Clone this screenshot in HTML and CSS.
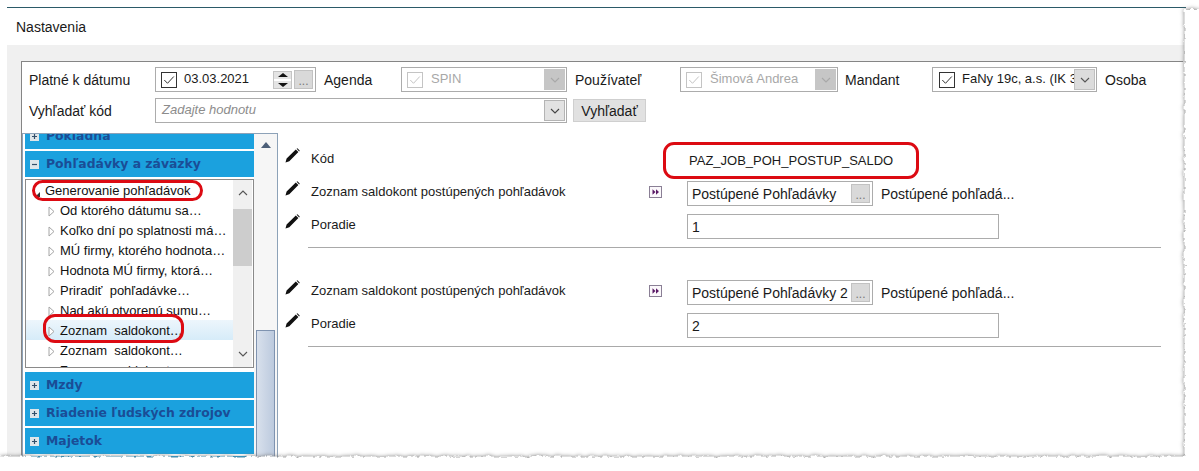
FILE: index.html
```html
<!DOCTYPE html>
<html lang="sk">
<head>
<meta charset="utf-8">
<title>Nastavenia</title>
<link rel="stylesheet" href="styles.css">
</head>
<body>
<svg class="defs" width="0" height="0" aria-hidden="true">
  <defs>
    <symbol id="pencil" viewBox="0 0 15 15"><path d="M0.5 14.5 L1.6 10.6 L10.8 1.6 L13.4 4.1 L4.3 13.3 Z M11.6 0.8 L12.4 0.3 L14.7 2.6 L14.2 3.4 Z" fill="#111"/></symbol>
    <symbol id="expand" viewBox="0 0 13 12"><rect x="0.5" y="0.5" width="12" height="11" fill="#fbf8fb" stroke="#8a7f95"/><path d="M3.5 3.2 L6.5 6 L3.5 8.8 Z M7 3.2 L10 6 L7 8.8 Z" fill="#5a1a66"/></symbol>
    <symbol id="tick" viewBox="0 0 16 16"><rect x="0.5" y="0.5" width="15" height="15" fill="#fff" stroke="currentColor"/><path d="M3.3 8 L6.5 11.3 L12.8 4.5" fill="none" stroke="currentColor" stroke-width="1"/></symbol>
    <symbol id="chev" viewBox="0 0 10 6"><path d="M1 1 L5 5 L9 1" fill="none" stroke="currentColor" stroke-width="1.1"/></symbol>
    <symbol id="tri" viewBox="0 0 7 11"><path d="M1 1 L6 5.5 L1 10 Z" fill="#fff" stroke="#a6a6a6"/></symbol>
    <symbol id="plus" viewBox="0 0 9 9"><rect x="0" y="0" width="9" height="9" fill="#dfe6ea"/><path d="M2 4.5 H7 M4.5 2 V7" stroke="#33506b" stroke-width="1.2"/></symbol>
    <symbol id="minus" viewBox="0 0 9 9"><rect x="0" y="0" width="9" height="9" fill="#dfe6ea"/><path d="M2 4.5 H7" stroke="#33506b" stroke-width="1.2"/></symbol>
    <filter id="torn" x="-5%" y="-5%" width="110%" height="110%" color-interpolation-filters="sRGB">
      <feTurbulence type="fractalNoise" baseFrequency="0.22" numOctaves="2" seed="7"/>
      <feDisplacementMap in="SourceGraphic" scale="5" xChannelSelector="R" yChannelSelector="G"/>
    </filter>
  </defs>
</svg>

<div class="window">
  <div class="titlebar">Nastavenia</div>
  <div class="band"></div>
  <div class="frame">
    <div class="panel">
      <div class="toolbar">
        <div class="tool-row">
          <span class="lbl lbl-date">Platné k dátumu</span>
          <div class="ctl ctl-date">
            <svg class="chk"><use href="#tick"/></svg>
            <span class="ctl-text date-text">03.03.2021</span>
            <span class="spin"><span class="spin-up"></span><span class="spin-down"></span></span>
            <span class="dots">...</span>
          </div>
          <span class="lbl lbl-agenda">Agenda</span>
          <div class="ctl ctl-agenda off">
            <svg class="chk"><use href="#tick"/></svg>
            <span class="ctl-text">SPIN</span>
            <span class="arrow"><svg class="chev"><use href="#chev"/></svg></span>
          </div>
          <span class="lbl lbl-user">Používateľ</span>
          <div class="ctl ctl-user off">
            <svg class="chk"><use href="#tick"/></svg>
            <span class="ctl-text">Šimová Andrea</span>
            <span class="arrow"><svg class="chev"><use href="#chev"/></svg></span>
          </div>
          <span class="lbl lbl-mandant">Mandant</span>
          <div class="ctl ctl-mandant">
            <svg class="chk"><use href="#tick"/></svg>
            <span class="ctl-text">FaNy 19c, a.s. (IK 3</span>
            <span class="arrow arrow-soft"><svg class="chev"><use href="#chev"/></svg></span>
          </div>
          <span class="lbl lbl-osoba">Osoba</span>
        </div>
        <div class="tool-row tool-row-2">
          <span class="lbl lbl-date">Vyhľadať kód</span>
          <div class="ctl ctl-search">
            <span class="placeholder">Zadajte hodnotu</span>
            <span class="arrow arrow-light"><svg class="chev"><use href="#chev"/></svg></span>
          </div>
          <span class="search-btn">Vyhľadať</span>
        </div>
      </div>

      <div class="workspace">
        <aside class="sidebar">
          <div class="accordion">
            <div class="acc-head acc-clipped"><svg class="acc-ico"><use href="#plus"/></svg>Pokladňa</div>
            <div class="acc-head"><svg class="acc-ico"><use href="#minus"/></svg>Pohľadávky a záväzky</div>
            <div class="tree">
              <ul class="tree-list">
                <li class="node node-root"><span class="root-mark"></span>Generovanie pohľadávok</li>
                <li class="node"><svg class="tri"><use href="#tri"/></svg>Od ktorého dátumu sa…</li>
                <li class="node"><svg class="tri"><use href="#tri"/></svg>Koľko dní po splatnosti má…</li>
                <li class="node"><svg class="tri"><use href="#tri"/></svg>MÚ firmy, ktorého hodnota…</li>
                <li class="node"><svg class="tri"><use href="#tri"/></svg>Hodnota MÚ firmy, ktorá…</li>
                <li class="node"><svg class="tri"><use href="#tri"/></svg>Priradiť  pohľadávke…</li>
                <li class="node"><svg class="tri"><use href="#tri"/></svg>Nad akú otvorenú sumu…</li>
                <li class="node node-hot"><svg class="tri"><use href="#tri"/></svg>Zoznam  saldokont…</li>
                <li class="node"><svg class="tri"><use href="#tri"/></svg>Zoznam  saldokont…</li>
                <li class="node"><svg class="tri"><use href="#tri"/></svg>Zoznam  saldokont…</li>
              </ul>
              <div class="tree-scroll">
                <svg class="chev chev-up"><use href="#chev"/></svg>
                <span class="tree-thumb"></span>
                <svg class="chev chev-down"><use href="#chev"/></svg>
              </div>
            </div>
            <div class="acc-head acc-after"><svg class="acc-ico"><use href="#plus"/></svg>Mzdy</div>
            <div class="acc-head"><svg class="acc-ico"><use href="#plus"/></svg>Riadenie ľudských zdrojov</div>
            <div class="acc-head"><svg class="acc-ico"><use href="#plus"/></svg>Majetok</div>
            <div class="acc-head"></div>
          </div>
          <div class="side-scroll">
            <span class="side-up"></span>
            <span class="side-thumb"></span>
          </div>
        </aside>

        <main class="form">
          <div class="row">
            <svg class="pencil"><use href="#pencil"/></svg>
            <span class="row-label">Kód</span>
            <span></span>
            <span class="code-value">PAZ_JOB_POH_POSTUP_SALDO</span>
          </div>
          <div class="row">
            <svg class="pencil"><use href="#pencil"/></svg>
            <span class="row-label">Zoznam saldokont postúpených pohľadávok</span>
            <svg class="expand"><use href="#expand"/></svg>
            <div class="value-line">
              <div class="pick"><span class="pick-text">Postúpené Pohľadávky</span><span class="dots">...</span></div>
              <span class="pick-desc">Postúpené pohľadá...</span>
            </div>
          </div>
          <div class="row">
            <svg class="pencil"><use href="#pencil"/></svg>
            <span class="row-label">Poradie</span>
            <span></span>
            <div class="num">1</div>
          </div>
          <div class="rule"></div>
          <div class="row row-second">
            <svg class="pencil"><use href="#pencil"/></svg>
            <span class="row-label">Zoznam saldokont postúpených pohľadávok</span>
            <svg class="expand"><use href="#expand"/></svg>
            <div class="value-line">
              <div class="pick"><span class="pick-text">Postúpené Pohľadávky 2</span><span class="dots">...</span></div>
              <span class="pick-desc">Postúpené pohľadá...</span>
            </div>
          </div>
          <div class="row">
            <svg class="pencil"><use href="#pencil"/></svg>
            <span class="row-label">Poradie</span>
            <span></span>
            <div class="num">2</div>
          </div>
          <div class="rule"></div>
        </main>
      </div>
    </div>
  </div>
</div>

<span class="mark mark-code"></span>
<span class="mark mark-root"></span>
<span class="mark mark-item"></span>

<svg class="tear" width="1199" height="471" aria-hidden="true">
  <path d="M1184.5 9 H1230 V500 H-30 V456.5 H1184.5 Z" fill="#fff" filter="url(#torn)"/>
</svg>
</body>
</html>
```

FILE: styles.css
```css
* { box-sizing: border-box; }
html, body { margin: 0; padding: 0; background: #fff; }
body {
  position: relative;
  width: 1199px;
  height: 471px;
  overflow: hidden;
  font: 14px/20px "Liberation Sans", Arial, sans-serif;
  color: #1a1a1a;
}
.defs { position: absolute; }

.window {
  margin: 7px 0 0 7px;
  width: 1179px;
  height: 464px;
  border-top: 1px solid #2b5a68;
  display: flex;
  flex-direction: column;
}
.titlebar { height: 37px; padding: 9px 0 0 9px; font-size: 14px; background: #fff; }
.band { height: 16px; background: #f0f0f0; }
.frame { flex: 1; min-height: 0; background: #f0f0f0; padding-left: 14px; }
.panel {
  height: 100%;
  background: #fff;
  border-top: 1px solid #858585;
  border-left: 1px solid #858585;
  display: flex;
  flex-direction: column;
  overflow: hidden;
}

/* toolbar */
.toolbar { padding: 5px 0 0 7px; height: 71px; }
.tool-row { display: flex; align-items: center; height: 25px; white-space: nowrap; }
.tool-row-2 { margin-top: 6px; }
.lbl { display: block; flex: none; }
.lbl-date { width: 126px; }
.lbl-agenda { width: 85px; padding-left: 8px; }
.lbl-user { width: 113px; padding-left: 8px; }
.lbl-mandant { width: 94px; padding-left: 7px; }
.lbl-osoba { padding-left: 8px; }

.ctl {
  position: relative;
  flex: none;
  height: 25px;
  border: 1px solid #acacac;
  display: flex;
  align-items: center;
  background: #fff;
  overflow: hidden;
}
.ctl-date { width: 161px; padding-left: 5px; }
.ctl-agenda { width: 166px; padding-left: 5px; }
.ctl-user { width: 158px; padding-left: 5px; }
.ctl-mandant { width: 165px; padding-left: 6px; }
.ctl-search { width: 412px; padding-left: 6px; justify-content: space-between; }
.chk { width: 16px; height: 16px; flex: none; color: #333; }
.ctl-text { margin-left: 7px; margin-top: -1px; white-space: nowrap; font-size: 13px; }
.date-text { flex: 1; margin-top: -2px; }
.off .chk { color: #c4c4c4; }
.off .ctl-text { color: #a8a8a8; margin-left: 8px; flex: 1; }
.ctl-mandant .ctl-text { flex: 1; overflow: hidden; }

.spin {
  width: 19px;
  height: 18px;
  flex: none;
  display: flex;
  flex-direction: column;
  justify-content: space-between;
  background: linear-gradient(#e4e4e4 0 7px, #fff 7px 9px, #e4e4e4 9px);
  border: 1px solid #c4c4c4;
  margin-right: 2px;
}
.spin-up, .spin-down { width: 0; height: 0; margin: 1px auto 0; border-left: 5px solid transparent; border-right: 5px solid transparent; }
.spin-up { border-bottom: 4px solid #111; }
.spin-down { border-top: 4px solid #111; margin: 0 auto 1px; }
.dots {
  display: block;
  flex: none;
  width: 19px;
  height: 19px;
  margin-right: 2px;
  background: #d9d9d9;
  border: 1px solid #c2c2c2;
  color: #777;
  font-size: 12px;
  line-height: 20px;
  text-align: center;
}
.arrow {
  flex: none;
  width: 21px;
  height: 21px;
  margin-right: 1px;
  display: flex;
  align-items: center;
  justify-content: center;
  background: #c6c6c6;
  color: #a8a8a8;
}
.arrow-soft { background: #dcdcdc; border: 1px solid #c0c0c0; color: #555; }
.arrow-light { background: #e2e2e2; border: 1px solid #b4b4b4; color: #444; }
.chev { width: 10px; height: 6px; display: block; }
.placeholder { font-style: italic; font-size: 13px; color: #8c8c8c; margin-top: -1px; }
.search-btn {
  flex: none;
  margin-left: 6px;
  width: 73px;
  height: 23px;
  line-height: 23px;
  text-align: center;
  background: #e1e1e1;
  border: 1px solid #cfcfcf;
}

/* workspace */
.workspace { flex: 1; min-height: 0; display: flex; }
.sidebar {
  flex: none;
  width: 256px;
  border: 1px solid #8da2b8;
  display: flex;
  background: #fff;
  overflow: hidden;
}
.accordion { flex: none; width: 231px; padding-left: 2px; overflow: hidden; }
.acc-head {
  height: 26px;
  margin-bottom: 2px;
  background: #1ba1de;
  color: #1a4d96;
  font: bold 12.4px/26px "DejaVu Sans", Verdana, sans-serif;
  display: flex;
  align-items: center;
  white-space: nowrap;
}
.acc-clipped { margin-top: -11px; }
.acc-after { margin-top: 4px; }
.acc-ico { width: 9px; height: 9px; flex: none; margin: 0 7px 0 5px; }

.tree {
  height: 189px;
  border: 1px solid #8a8a8a;
  display: flex;
  overflow: hidden;
  background: #fff;
}
.tree-list { flex: 1; margin: 0; padding: 0; list-style: none; min-width: 0; }
.node {
  height: 20px;
  line-height: 19px;
  padding-left: 22px;
  display: flex;
  align-items: center;
  white-space: pre;
  color: #111;
  font-size: 13px;
}
.node-root { padding-left: 19px; position: relative; }
.root-mark {
  position: absolute;
  left: 9px;
  top: 12px;
  width: 0;
  height: 0;
  border-left: 5px solid transparent;
  border-bottom: 5px solid #333;
}
.node-hot { background: linear-gradient(#edf6fc, #d6ecf9); }
.tri { width: 7px; height: 11px; flex: none; margin: 3px 5px 0 0; }
.tree-scroll {
  flex: none;
  width: 19px;
  margin-right: 1px;
  background: #f0f0f0;
  color: #555;
  display: flex;
  flex-direction: column;
  align-items: center;
}
.chev-up { transform: scaleY(-1); margin-top: 10px; }
.tree-thumb { display: block; width: 100%; height: 57px; margin-top: 13px; background: #cdcdcd; }
.chev-down { margin-top: 85px; }

.side-scroll {
  flex: 1;
  background: #f6f6f6;
  display: flex;
  flex-direction: column;
  align-items: center;
}
.side-up {
  width: 0;
  height: 0;
  margin-top: 8px;
  border-left: 5px solid transparent;
  border-right: 5px solid transparent;
  border-bottom: 6px solid #4d5f78;
}
.side-thumb {
  display: block;
  width: 19px;
  height: 140px;
  margin-top: 182px;
  background: linear-gradient(90deg, #d8e0ec, #bccade);
  border: 1px solid #7f93b0;
}

/* form */
.form { flex: 1; min-width: 0; padding: 15px 0 0 7px; }
.row {
  display: grid;
  grid-template-columns: 26px 338px 38px 1fr;
  height: 25px;
  margin-bottom: 8px;
  align-items: start;
}
.row-second { margin-top: 32px; }
.pencil { width: 15px; height: 15px; display: block; }
.row-label { line-height: 21px; font-size: 13px; }
.expand { width: 13px; height: 12px; display: block; margin-top: 5px; }
.code-value { padding: 2px 0 0 2px; font-size: 13px; line-height: 22px; }
.value-line { display: flex; align-items: center; }
.pick {
  flex: none;
  width: 186px;
  height: 25px;
  border: 1px solid #acacac;
  display: flex;
  align-items: center;
  justify-content: space-between;
  padding-left: 4px;
  white-space: nowrap;
}
.pick-desc { margin-left: 8px; white-space: nowrap; }
.num {
  width: 312px;
  height: 25px;
  border: 1px solid #acacac;
  padding-left: 4px;
  line-height: 24px;
}
.rule { height: 1px; margin: 0 0 0 23px; width: 853px; background: #a9a9a9; }

/* hand-drawn annotations over the screenshot */
.mark { position: absolute; border: 3px solid #dc0a12; pointer-events: none; }
.mark-code { left: 663px; top: 142px; width: 256px; height: 37px; border-radius: 11px; }
.mark-root { left: 32px; top: 180px; width: 171px; height: 21px; border-radius: 11px; }
.mark-item { left: 43px; top: 314px; width: 141px; height: 29px; border-radius: 12px; }

/* torn paper edge */
.tear { position: absolute; left: 0; top: 0; display: block; filter: drop-shadow(0 0 2px #777); }
```
